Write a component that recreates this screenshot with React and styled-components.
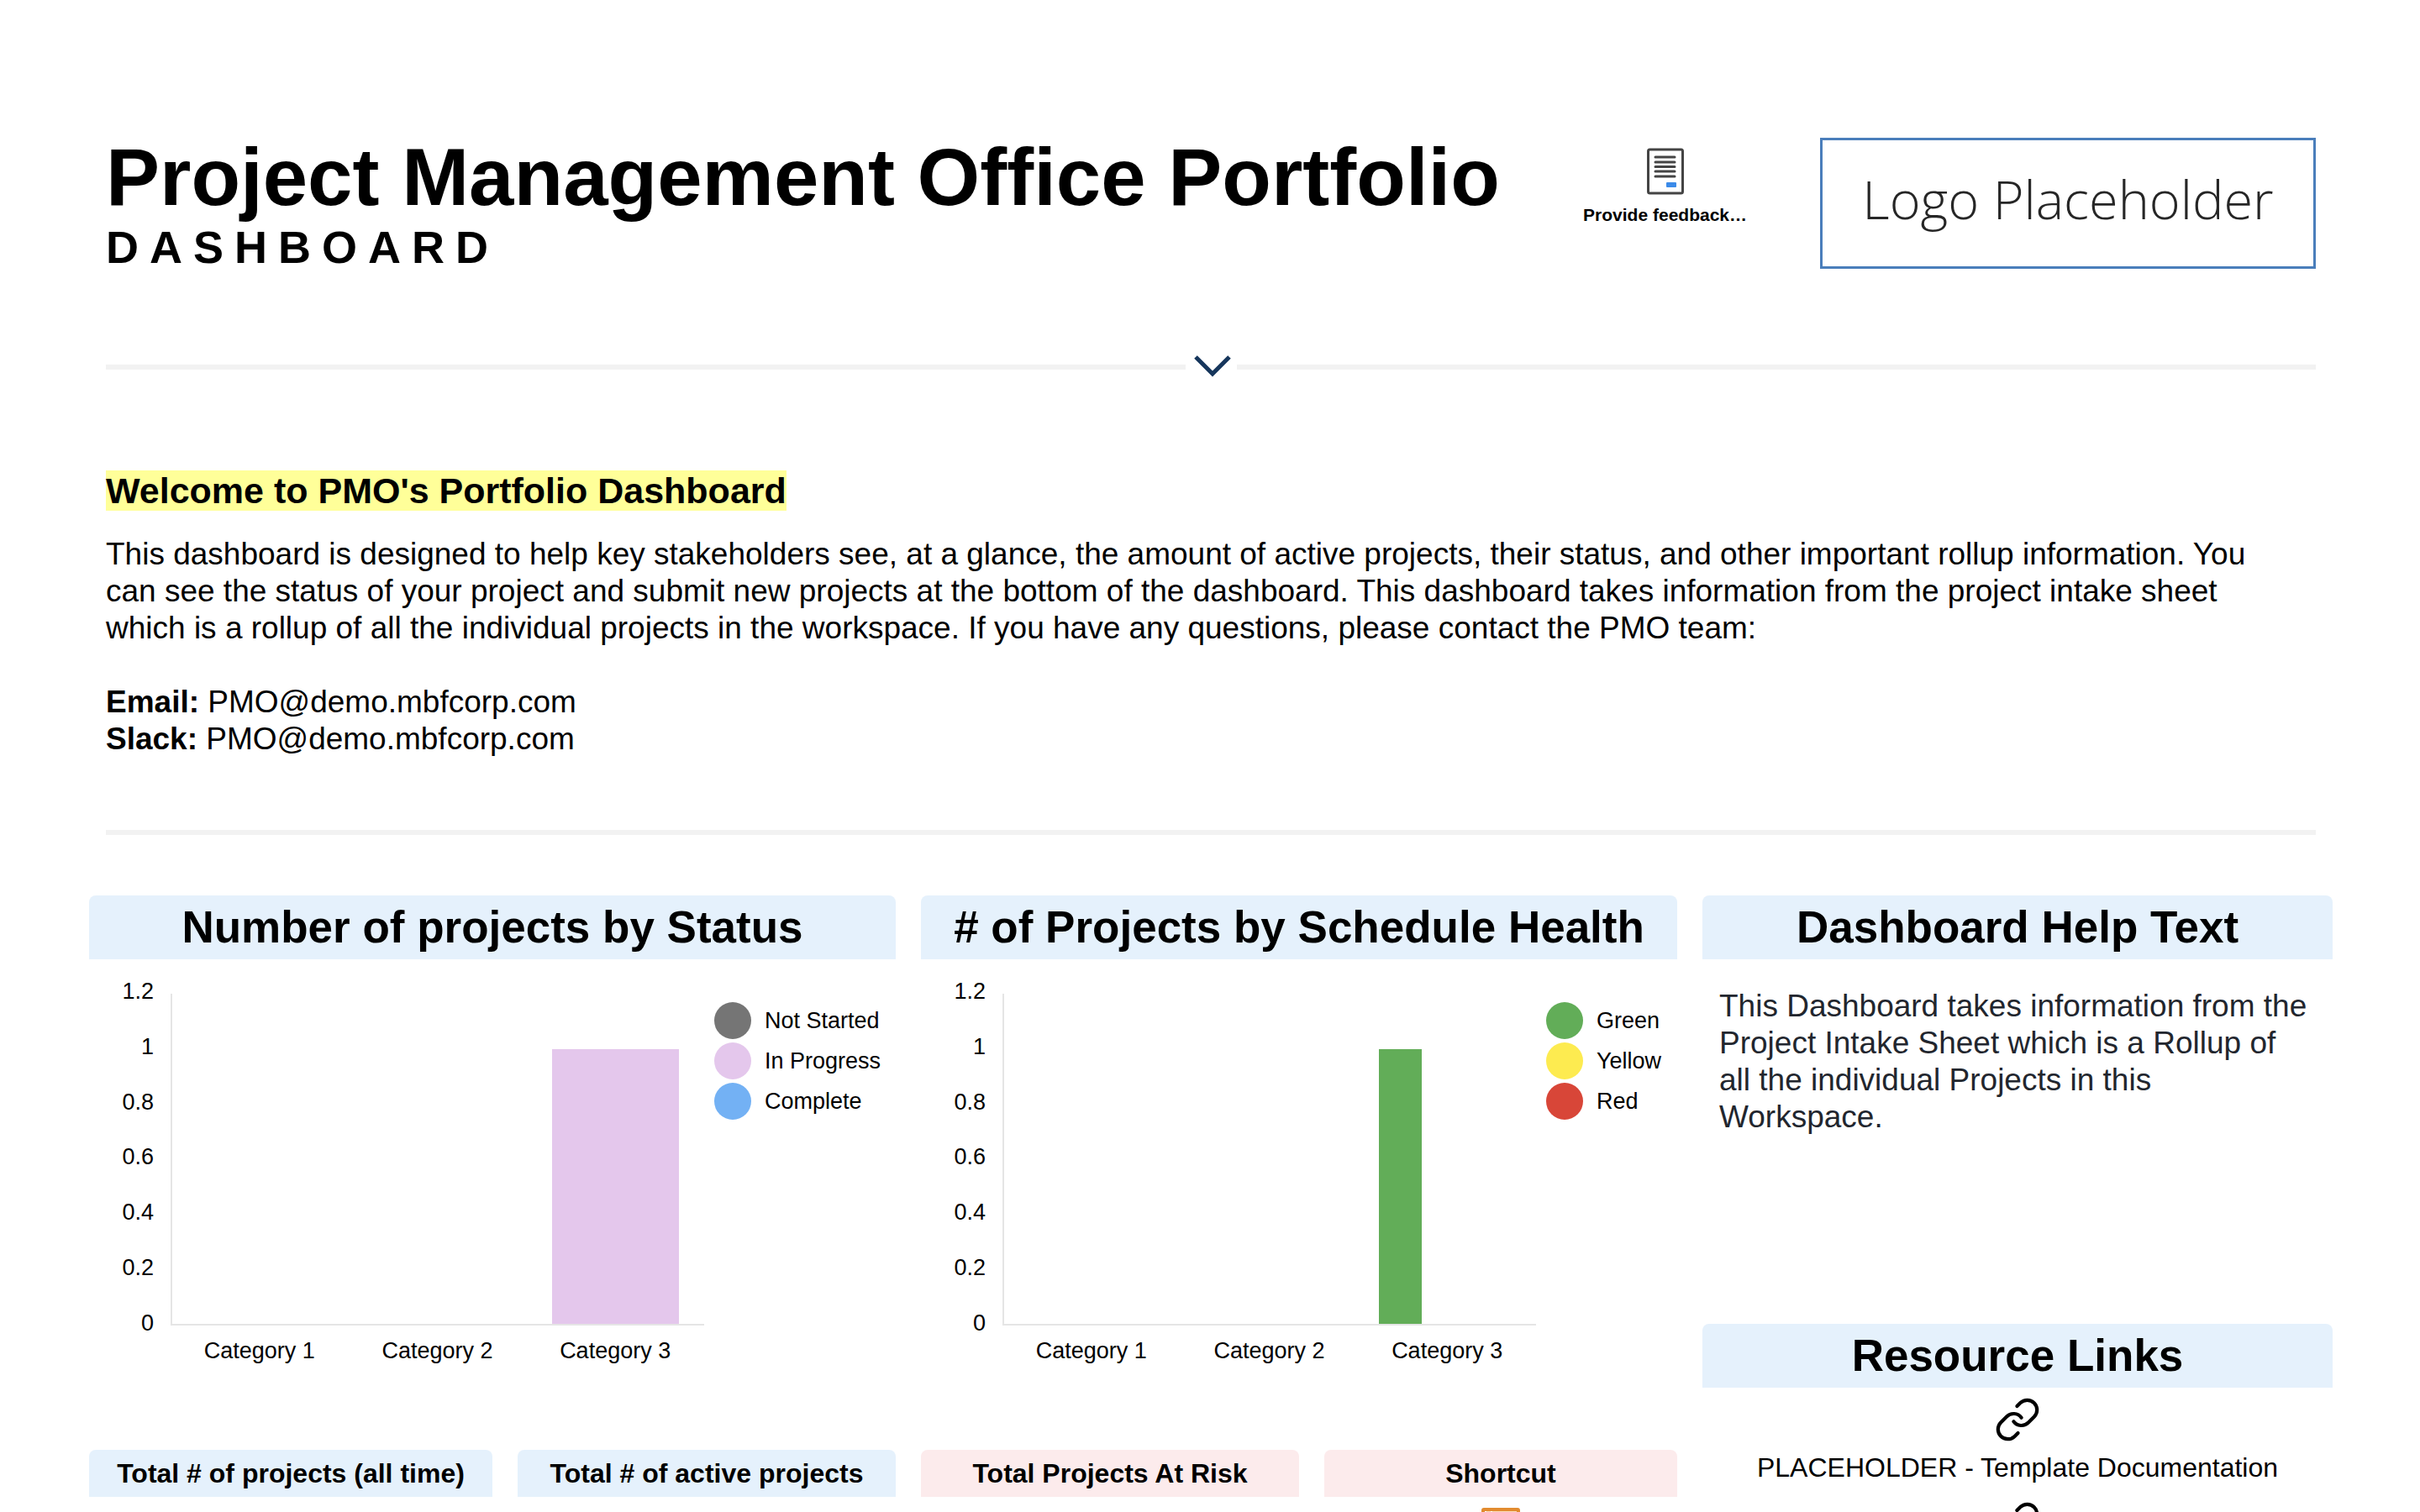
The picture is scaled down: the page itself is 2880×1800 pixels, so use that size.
import React from "react";
import styled, { createGlobalStyle } from "styled-components";
import { Link as LinkIcon } from "lucide-react";

const GlobalStyle = createGlobalStyle`
  * {
    box-sizing: border-box;
  }
  body {
    margin: 0;
    background-color: #ffffff;
    color: #000000;
    font-family: "Liberation Sans", Arial, sans-serif;
  }
`;

const Page = styled.main`
  height: 100vh;
  overflow: hidden;
  padding: 158px 104px 0 106px;
`;

const Section = styled.section`
  padding: 0 60px 0 20px;
`;

const HeaderRow = styled.header`
  display: flex;
  align-items: flex-start;
  padding: 0 20px;
`;

const Heading = styled.div`
  flex: 1;
`;

const Title = styled.h1`
  margin: 0;
  font-size: 96px;
  line-height: 106px;
`;

const Subtitle = styled.p`
  margin: 0;
  font-size: 54px;
  font-weight: bold;
  line-height: 60px;
  letter-spacing: 13px;
`;

const Feedback = styled.a`
  display: flex;
  flex-direction: column;
  align-items: center;
  gap: 12px;
  margin: 18px 87px 0 0;
  color: inherit;
  font-size: 21px;
  font-weight: bold;
  line-height: 24px;
  text-decoration: none;
`;

const Logo = styled.div`
  display: flex;
  align-items: center;
  justify-content: center;
  width: 590px;
  height: 156px;
  margin-top: 6px;
  padding-bottom: 12px;
  border: 3px solid #4a7ebb;
  color: #262626;
  font-family: "Open Sans", sans-serif;
  font-size: 63px;
  font-weight: 300;
`;

const ToggleRow = styled.div`
  display: flex;
  align-items: center;
  margin: 99px 20px 109px;
`;

const Line = styled.div`
  flex: 1;
  height: 6px;
  background-color: #f2f2f2;
`;

const Toggle = styled.button`
  display: flex;
  padding: 0;
  border: 0;
  background: none;
  cursor: pointer;
`;

const Rule = styled.hr`
  height: 6px;
  margin: 86px 20px 72px;
  border: 0;
  background-color: #f2f2f2;
`;

const WelcomeTitle = styled.h2`
  margin: 0 0 30px;
  font-size: 43px;
  line-height: 48px;
`;

const Mark = styled.mark`
  display: inline-block;
  background-color: #ffff99;
  color: inherit;
`;

const Text = styled.p`
  margin: 0;
  color: ${(props) => props.$color || "inherit"};
  font-size: 37px;
  line-height: 44px;
`;

const Contact = styled(Text)`
  margin-top: 44px;
`;

const Columns = styled.div`
  display: grid;
  grid-template-columns: 63fr 25fr;
  gap: 30px;
`;

const Left = styled.div`
  display: flex;
  flex-direction: column;
  gap: 30px;
`;

const Right = styled(Left)``;

const ChartRow = styled.div`
  display: grid;
  grid-template-columns: 32fr 30fr;
  gap: 30px;
`;

const MetricRow = styled.div`
  display: grid;
  grid-template-columns: 16fr 15fr 15fr 14fr;
  gap: 30px;
`;

const Widget = styled.section`
  min-height: ${(props) => props.$minHeight || 0}px;
`;

const WidgetTitle = styled.h2`
  margin: 0;
  border-radius: 8px 8px 0 0;
  background-color: #e5f1fc;
  font-size: 53px;
  line-height: 76px;
  text-align: center;
  white-space: nowrap;
`;

const MetricTitle = styled.h3`
  margin: 0;
  border-radius: 8px 8px 0 0;
  background-color: ${(props) => (props.$alert ? "#fcebec" : "#e5f1fc")};
  font-size: 32px;
  line-height: 56px;
  text-align: center;
`;

const HelpBody = styled.div`
  padding: 34px 24px 0 20px;
`;

const ChartBody = styled.div`
  display: flex;
  padding-top: 25px;
  font-size: 27px;
`;

const Ticks = styled.div`
  display: flex;
  flex-direction: column;
  justify-content: space-between;
  width: 77px;
  height: 421px;
  line-height: 26px;
  text-align: right;
`;

const PlotArea = styled.div`
  flex: 0 1 635px;
  margin: 16px 0 0 20px;
`;

const Plot = styled.div`
  display: grid;
  grid-template-columns: repeat(3, 1fr);
  height: 395px;
  border-left: 2px solid #e5e5e5;
  border-bottom: 2px solid #e5e5e5;
`;

const Group = styled.div`
  display: flex;
  align-items: flex-end;
  gap: 5px;
  width: ${(props) => (props.$clustered ? "77%" : "72%")};
  margin: 0 auto;
`;

const Bar = styled.div`
  flex: 1;
  background-color: ${(props) => props.$color};
`;

const Categories = styled.div`
  display: grid;
  grid-template-columns: repeat(3, 1fr);
  margin-top: 15px;
  line-height: 30px;
  text-align: center;
`;

const Legend = styled.ul`
  display: flex;
  flex-direction: column;
  gap: 4px;
  margin: 26px 0 0 12px;
  padding: 0;
  list-style: none;
`;

const LegendItem = styled.li`
  display: flex;
  align-items: center;
  gap: 16px;
  height: 44px;
  line-height: 30px;
  white-space: nowrap;
`;

const Dot = styled.span`
  width: 44px;
  height: 44px;
  border-radius: 50%;
  background-color: ${(props) => props.$color};
`;

const Links = styled.div`
  display: flex;
  flex-direction: column;
  align-items: center;
  gap: 21px;
  padding-top: 10px;
`;

const ResourceLink = styled.a`
  display: flex;
  flex-direction: column;
  align-items: center;
  gap: 11px;
  color: inherit;
  font-size: 32px;
  line-height: 36px;
  text-decoration: none;
`;

const Shortcut = styled.a`
  display: flex;
  justify-content: center;
  padding-top: 13px;
`;

const TICKS = ["1.2", "1", "0.8", "0.6", "0.4", "0.2", "0"];
const MAX_VALUE = 1.2;

const statusChart = {
  title: "Number of projects by Status",
  legend: [
    { label: "Not Started", color: "#757575" },
    { label: "In Progress", color: "#e4c7ec" },
    { label: "Complete", color: "#73b1f4" },
  ],
  groups: [
    { name: "Category 1", bars: [] },
    { name: "Category 2", bars: [] },
    { name: "Category 3", bars: [{ value: 1, color: "#e4c7ec" }] },
  ],
};

const healthChart = {
  title: "# of Projects by Schedule Health",
  legend: [
    { label: "Green", color: "#62ad58" },
    { label: "Yellow", color: "#fdeb50" },
    { label: "Red", color: "#d84638" },
  ],
  groups: [
    { name: "Category 1", bars: [] },
    { name: "Category 2", bars: [] },
    {
      name: "Category 3",
      bars: [
        { value: 1, color: "#62ad58" },
        { value: 0, color: "#fdeb50" },
        { value: 0, color: "#d84638" },
      ],
    },
  ],
};

const metrics = [
  { title: "Total # of projects (all time)" },
  { title: "Total # of active projects" },
  { title: "Total Projects At Risk", alert: true },
  { title: "Shortcut", alert: true, shortcut: true },
];

function FormIcon() {
  return (
    <svg width="44" height="56" viewBox="0 0 44 56" aria-hidden="true">
      <rect x="1.5" y="2" width="41" height="52" rx="2" fill="#fff" stroke="#444" strokeWidth="3" />
      <path
        d="M10 11h23M10 17h23M10 22.500h23M10 28h23M10 34h23"
        stroke="#444"
        strokeWidth="3"
        strokeLinecap="round"
      />
      <rect x="23" y="41" width="12" height="6" rx="1" fill="#3b8ae8" />
    </svg>
  );
}

function SheetIcon() {
  return (
    <svg width="46" height="54" viewBox="0 0 46 54" aria-hidden="true">
      <rect x="2" y="2" width="42" height="50" rx="1" fill="#fff" stroke="#e28b2f" strokeWidth="4" />
      <rect x="6" y="4" width="5" height="46" fill="#fbdcb8" />
      <rect x="13" y="4" width="29" height="46" fill="#fbdcb8" />
    </svg>
  );
}

function Chart({ title, legend, groups }) {
  return (
    <Widget $minHeight={630}>
      <WidgetTitle>{title}</WidgetTitle>
      <ChartBody>
        <Ticks>
          {TICKS.map((tick) => (
            <span key={tick}>{tick}</span>
          ))}
        </Ticks>
        <PlotArea>
          <Plot>
            {groups.map((group) => (
              <Group key={group.name} $clustered={group.bars.length > 1}>
                {group.bars.map((bar) => (
                  <Bar
                    key={bar.color}
                    $color={bar.color}
                    style={{ height: `${(bar.value / MAX_VALUE) * 100}%` }}
                  />
                ))}
              </Group>
            ))}
          </Plot>
          <Categories>
            {groups.map((group) => (
              <span key={group.name}>{group.name}</span>
            ))}
          </Categories>
        </PlotArea>
        <Legend>
          {legend.map((item) => (
            <LegendItem key={item.label}>
              <Dot $color={item.color} />
              {item.label}
            </LegendItem>
          ))}
        </Legend>
      </ChartBody>
    </Widget>
  );
}

function App() {
  return (
    <>
      <GlobalStyle />
      <Page>
        <HeaderRow>
          <Heading>
            <Title>Project Management Office Portfolio</Title>
            <Subtitle>DASHBOARD</Subtitle>
          </Heading>
          <Feedback href="#feedback">
            <FormIcon />
            Provide feedback…
          </Feedback>
          <Logo>Logo Placeholder</Logo>
        </HeaderRow>

        <ToggleRow>
          <Line />
          <Toggle type="button" aria-label="Toggle introduction">
            <svg width="61" height="28" viewBox="0 0 61 28">
              <path d="M12 2l20 20 20-20" fill="none" stroke="#16365c" strokeWidth="5" />
            </svg>
          </Toggle>
          <Line />
        </ToggleRow>

        <Section>
          <WelcomeTitle>
            <Mark>Welcome to PMO's Portfolio Dashboard</Mark>
          </WelcomeTitle>
          <Text>
            This dashboard is designed to help key stakeholders see, at a glance, the amount of
            active projects, their status, and other important rollup information. You can see the
            status of your project and submit new projects at the bottom of the dashboard. This
            dashboard takes information from the project intake sheet which is a rollup of all the
            individual projects in the workspace. If you have any questions, please contact the PMO
            team:
          </Text>
          <Contact>
            <strong>Email:</strong> PMO@demo.mbfcorp.com
            <br />
            <strong>Slack:</strong> PMO@demo.mbfcorp.com
          </Contact>
        </Section>

        <Rule />

        <Columns>
          <Left>
            <ChartRow>
              <Chart {...statusChart} />
              <Chart {...healthChart} />
            </ChartRow>
            <MetricRow>
              {metrics.map((metric) => (
                <Widget key={metric.title}>
                  <MetricTitle $alert={metric.alert}>{metric.title}</MetricTitle>
                  {metric.shortcut && (
                    <Shortcut href="#shortcut" aria-label="Open sheet">
                      <SheetIcon />
                    </Shortcut>
                  )}
                </Widget>
              ))}
            </MetricRow>
          </Left>
          <Right>
            <Widget $minHeight={480}>
              <WidgetTitle>Dashboard Help Text</WidgetTitle>
              <HelpBody>
                <Text $color="#22262e">
                  This Dashboard takes information from the Project Intake Sheet which is a Rollup
                  of all the individual Projects in this Workspace.
                </Text>
              </HelpBody>
            </Widget>
            <Widget>
              <WidgetTitle>Resource Links</WidgetTitle>
              <Links>
                <ResourceLink href="#documentation">
                  <LinkIcon size={56} strokeWidth={1.8} />
                  PLACEHOLDER - Template Documentation
                </ResourceLink>
                <ResourceLink href="#resource" aria-label="Resource">
                  <LinkIcon size={56} strokeWidth={1.8} />
                </ResourceLink>
              </Links>
            </Widget>
          </Right>
        </Columns>
      </Page>
    </>
  );
}

export default App;
